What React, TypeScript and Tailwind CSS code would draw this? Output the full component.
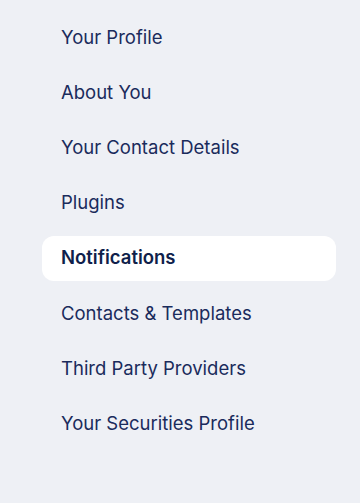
import React from "react";

const items = [
  "Your Profile",
  "About You",
  "Your Contact Details",
  "Plugins",
  "Notifications",
  "Contacts & Templates",
  "Third Party Providers",
  "Your Securities Profile",
];

export default function App() {
  return (
    <div
      className="w-[360px] h-[503px] bg-[#eef0f5] pt-[15px] pl-[42px]"
      style={{ fontFamily: "Inter, 'Noto Sans', sans-serif" }}
    >
      <ul className="flex flex-col gap-[10.2px] w-[294px]">
        {items.map((label) => {
          const active = label === "Notifications";
          return (
            <li
              key={label}
              className={
                active
                  ? "h-[45px] flex items-center px-[19px] rounded-[12px] bg-white text-[18.5px] font-semibold text-[#0f1f4b]"
                  : "h-[45px] flex items-center px-[19px] rounded-[12px] text-[18.5px] text-[#1a2b5c]"
              }
            >
              {label}
            </li>
          );
        })}
      </ul>
    </div>
  );
}
